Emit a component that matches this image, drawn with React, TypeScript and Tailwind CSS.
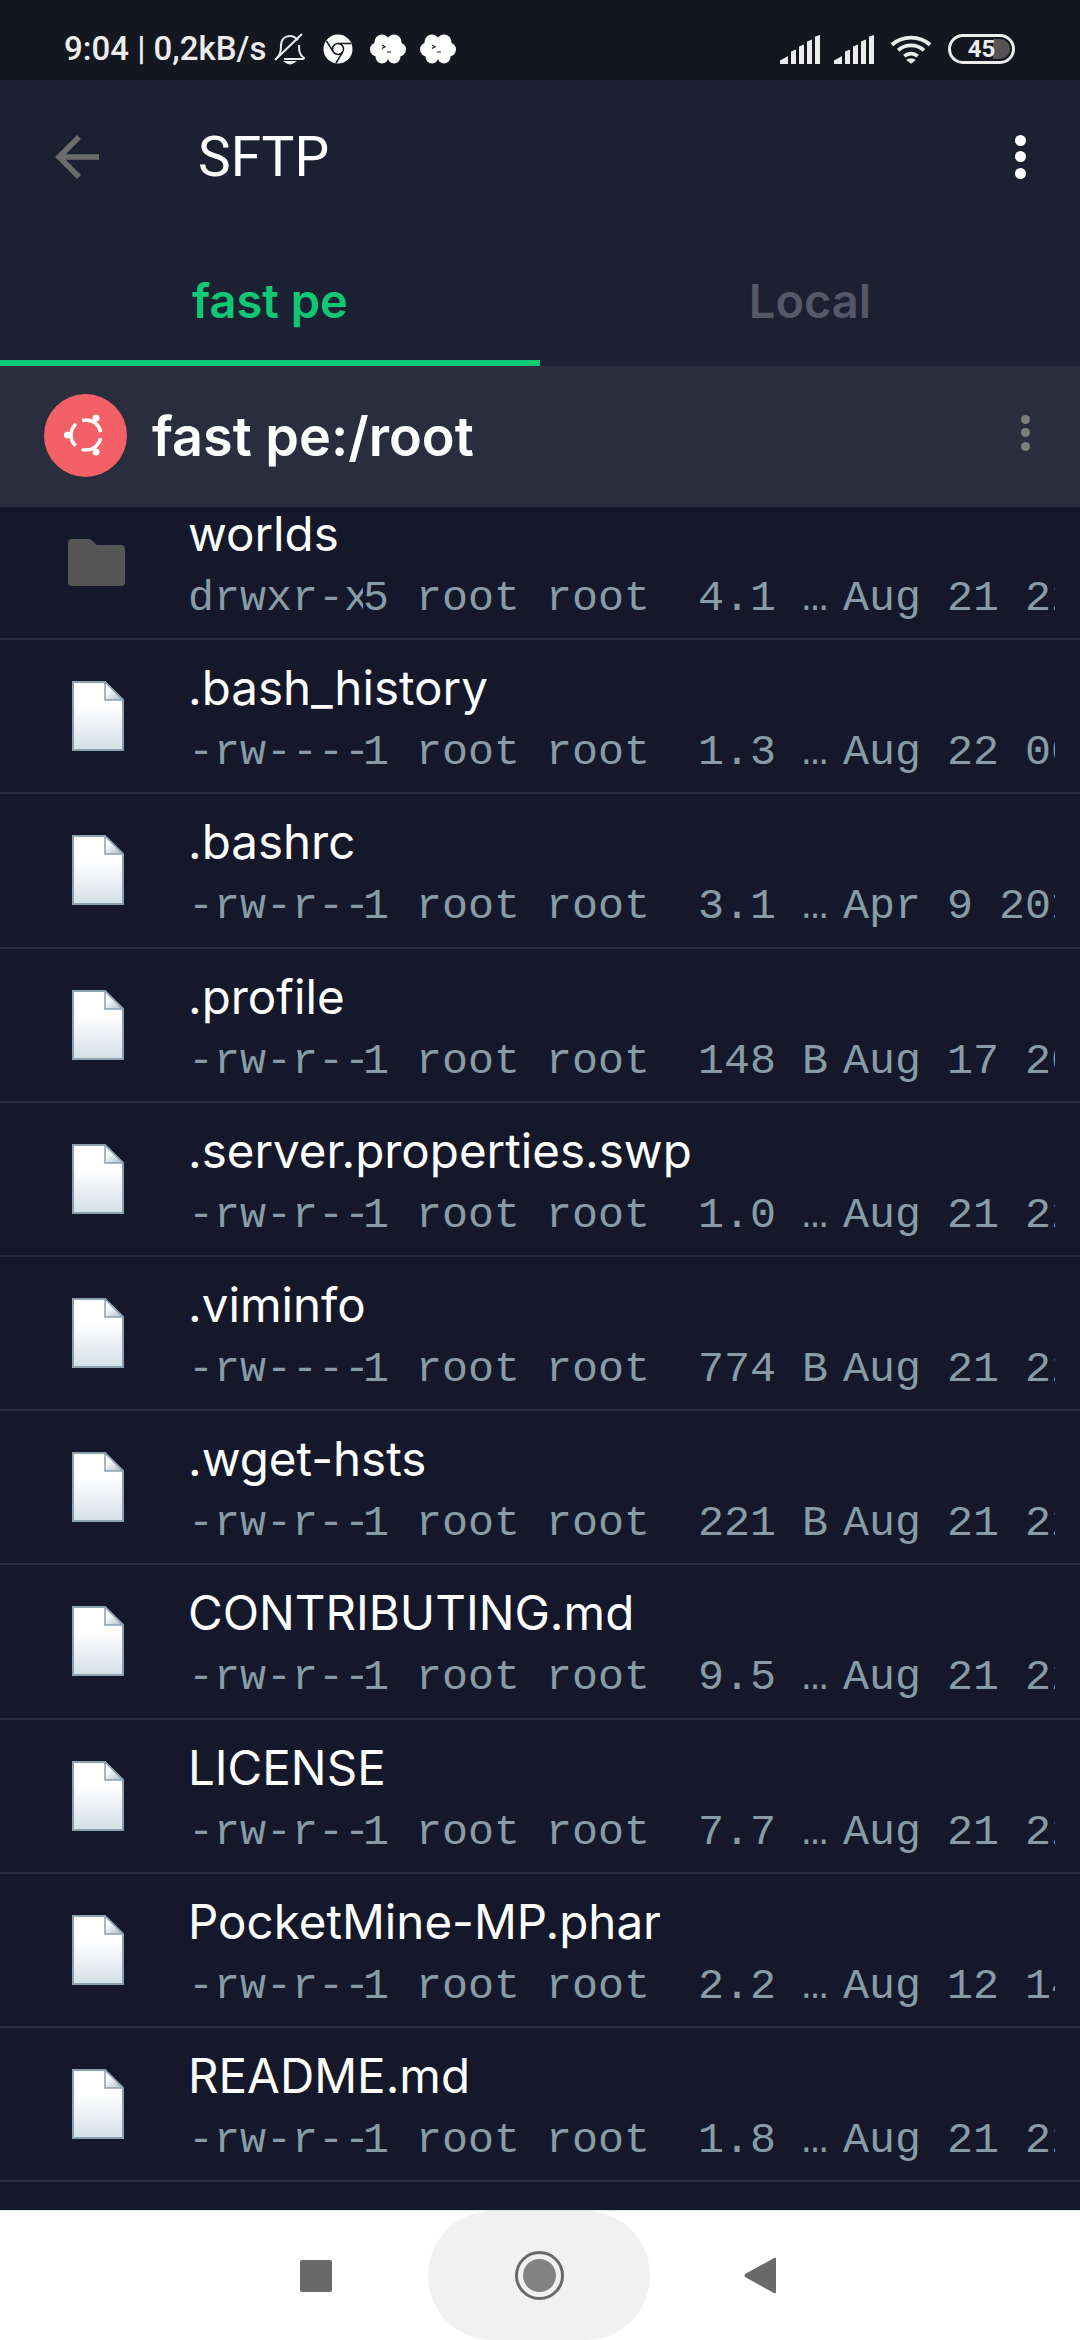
const mono = "font-['Liberation_Mono',monospace]"

const files = [
  { name: '.bash_history', perms: '-rw----', size: '1.3 KB', date: 'Aug 22 00:14' },
  { name: '.bashrc', perms: '-rw-r--', size: '3.1 KB', date: 'Apr 9 2018' },
  { name: '.profile', perms: '-rw-r--', size: '148 B', date: 'Aug 17 20:02' },
  { name: '.server.properties.swp', perms: '-rw-r--', size: '1.0 KB', date: 'Aug 21 22:31' },
  { name: '.viminfo', perms: '-rw----', size: '774 B', date: 'Aug 21 22:40' },
  { name: '.wget-hsts', perms: '-rw-r--', size: '221 B', date: 'Aug 21 22:12' },
  { name: 'CONTRIBUTING.md', perms: '-rw-r--', size: '9.5 KB', date: 'Aug 21 22:12' },
  { name: 'LICENSE', perms: '-rw-r--', size: '7.7 KB', date: 'Aug 21 22:12' },
  { name: 'PocketMine-MP.phar', perms: '-rw-r--', size: '2.2 MB', date: 'Aug 12 14:50' },
  { name: 'README.md', perms: '-rw-r--', size: '1.8 KB', date: 'Aug 21 22:12' },
]

function FileIcon() {
  return (
    <svg width="52" height="70" viewBox="0 0 52 70" className="shrink-0">
      <defs>
        <linearGradient id="page" x1="0" y1="0" x2="0" y2="1">
          <stop offset="0.35" stopColor="#ffffff" />
          <stop offset="1" stopColor="#d5e0e8" />
        </linearGradient>
        <linearGradient id="fold" x1="0" y1="0" x2="1" y2="1">
          <stop offset="0.3" stopColor="#ffffff" />
          <stop offset="1" stopColor="#a9b6c0" />
        </linearGradient>
      </defs>
      <path d="M1 1H33L51 19V69H1Z" fill="url(#page)" stroke="#8ba0b0" strokeWidth="2" />
      <path d="M33 1L51 19H33Z" fill="url(#fold)" stroke="#8ba0b0" strokeWidth="1.5" />
    </svg>
  )
}

function FolderIcon() {
  return (
    <svg width="57" height="47" viewBox="0 0 57 47" className="shrink-0">
      <path d="M4 0H22L29 6H53Q57 6 57 10V43Q57 47 53 47H4Q0 47 0 43V4Q0 0 4 0Z" fill="#555555" />
    </svg>
  )
}

function UbuntuLogo() {
  return (
    <div className="w-[83px] h-[83px] mb-[3px] rounded-full bg-[#f46067] flex items-center justify-center shrink-0">
      <svg width="44" height="44" viewBox="0 0 44 44" fill="none">
        <circle cx="22" cy="22" r="15" stroke="#fff" strokeWidth="3.500" strokeDasharray="24.400 7" strokeDashoffset="-3.500" />
        <circle cx="3.500" cy="22" r="3.500" fill="#fff" />
        <circle cx="32" cy="5" r="3.500" fill="#fff" />
        <circle cx="32" cy="39" r="3.500" fill="#fff" />
      </svg>
    </div>
  )
}

function Cloud() {
  return (
    <svg width="36" height="30" viewBox="0 0 36 30">
      <g fill="#fff">
        <circle cx="12" cy="8" r="7.500" />
        <circle cx="24" cy="8" r="7.500" />
        <circle cx="7" cy="15.500" r="7" />
        <circle cx="29" cy="15.500" r="7" />
        <circle cx="12" cy="23" r="6.500" />
        <circle cx="24" cy="23" r="6.500" />
        <circle cx="18" cy="15" r="10" />
      </g>
      <path d="M12 11L15 12.800L12 14.500M17 18H21" stroke="#14171f" strokeWidth="1.200" fill="none" />
    </svg>
  )
}

function Signal() {
  return (
    <svg width="40" height="29" viewBox="0 0 40 29" fill="#ececec">
      <path d="M0 29V25.500L8 21V29Z" />
      <path d="M11 29V16.500L16 14.500V29Z" />
      <path d="M19 29V11.500L24 9.500V29Z" />
      <path d="M27 29V6.500L32 4.500V29Z" />
      <path d="M35 29V1.500L40 0V29Z" />
    </svg>
  )
}

function StatusBar() {
  return (
    <div className="h-[80px] bg-[#14171f] flex items-center justify-between pl-[64px] pr-[65px] pt-[18px] font-['Roboto',sans-serif] text-[#ececec]">
      <div className="flex items-center">
        <span className="text-[33px] font-medium whitespace-nowrap">9:04 | 0,2kB/s</span>
        <svg width="32" height="32" viewBox="0 0 32 32" fill="none" stroke="#ececec" strokeWidth="2" className="ml-[8px]">
          <path d="M3 25C7 21 7 17 7 13C7 6 11 3 16 3C20 3 22 5 24 7M25 12C25 18 25 21 30 25C30 26 29 26 27 26H10" />
          <path d="M1 27L28 1" />
          <path d="M12 29Q16 32 20 29Z" fill="#ececec" />
        </svg>
        <svg width="30" height="30" viewBox="0 0 30 30" className="ml-[17px]">
          <circle cx="15" cy="15" r="14.500" fill="#fff" />
          <circle cx="15" cy="15" r="5.500" fill="none" stroke="#14171f" strokeWidth="1.500" />
          <path d="M15 9.500H28M10.200 17.800L3.500 7M19.800 17.800L13 29" stroke="#14171f" strokeWidth="1.500" />
        </svg>
        <div className="ml-[17px]"><Cloud /></div>
        <div className="ml-[14px]"><Cloud /></div>
      </div>
      <div className="flex items-center">
        <Signal />
        <div className="ml-[14px]"><Signal /></div>
        <svg width="42" height="29" viewBox="0 0 44 30" fill="none" stroke="#ececec" strokeWidth="4" className="ml-[16px]">
          <path d="M2 10C13 0 31 0 42 10M8.500 16C16 9 28 9 35.500 16M15 22C19 18.500 25 18.500 29 22" />
          <path d="M22 30L17 26C20 24 24 24 27 26Z" fill="#ececec" stroke="none" />
        </svg>
        <div className="relative ml-[16px] w-[67px] h-[30px] rounded-full border-[3px] border-[#ececec] flex items-center justify-center overflow-hidden">
          <div className="absolute right-[2px] top-[2px] bottom-[2px] w-[17px] rounded-r-full bg-[#555555]" />
          <span className="relative text-[24px] font-bold leading-none text-[#ececec]">45</span>
        </div>
      </div>
    </div>
  )
}

function AppBar() {
  return (
    <div className="h-[153px] bg-[#1c2033] flex items-center pl-[55px] pr-[54px]">
      <svg width="44" height="44" viewBox="0 0 44 44" fill="none" stroke="#6c6c6c" strokeWidth="5.500">
        <path d="M44 22H6M24 2L4 22L24 42" />
      </svg>
      <span className="ml-[99px] pt-[2px] text-white text-[55px] font-['Roboto',sans-serif]">SFTP</span>
      <div className="ml-auto flex flex-col gap-[5.500px]">
        <div className="w-[11px] h-[11px] rounded-full bg-white" />
        <div className="w-[11px] h-[11px] rounded-full bg-white" />
        <div className="w-[11px] h-[11px] rounded-full bg-white" />
      </div>
    </div>
  )
}

function Tabs() {
  return (
    <div className="h-[133px] bg-[#1c2033] flex font-['Inter',sans-serif] font-semibold text-[47px]">
      <div className="w-1/2 flex items-center justify-center border-b-[6px] border-[#10c773] text-[#10c773] pt-[9px]">fast pe</div>
      <div className="w-1/2 flex items-center justify-center border-b-[6px] border-transparent text-[#555868] pt-[9px]">Local</div>
    </div>
  )
}

function PathBar() {
  return (
    <div className="h-[141px] bg-[#2a2d3e] flex items-center pl-[44px] pr-[50px]">
      <UbuntuLogo />
      <span className="ml-[25px] text-white text-[54px] font-semibold font-['Inter',sans-serif]">fast pe:/root</span>
      <div className="ml-auto mb-[8px] flex flex-col gap-[4.500px]">
        <div className="w-[9px] h-[9px] rounded-full bg-[#7d7d7d]" />
        <div className="w-[9px] h-[9px] rounded-full bg-[#7d7d7d]" />
        <div className="w-[9px] h-[9px] rounded-full bg-[#7d7d7d]" />
      </div>
    </div>
  )
}

function Row({ name, perms, size, date, links = '1', folder }: { name: string; perms: string; size: string; date: string; links?: string; folder?: boolean }) {
  return (
    <div className="h-[154.200px] shrink-0 border-b-[2px] border-[#2a2d3e] flex items-center pr-[25px]">
      <div className={`w-[188px] shrink-0 flex ${folder ? 'pl-[68px]' : 'pl-[72px]'}`}>{folder ? <FolderIcon /> : <FileIcon />}</div>
      <div className="min-w-0 flex-1 pt-[9px]">
        <div className="text-white text-[47.500px] leading-[56px] font-['Inter',sans-serif] whitespace-nowrap">{name}</div>
        <div className={`flex text-[43.330px] leading-[56px] text-[#8a9ba8] mt-[9px] whitespace-nowrap ${mono}`}>
          <span className="shrink-0 w-[175px] overflow-hidden">{perms}</span>
          <span className="shrink-0 w-[53px]">{links}</span>
          <span className="shrink-0 w-[130px]">root</span>
          <span className="shrink-0 w-[152px]">root</span>
          <span className="shrink-0 w-[131px] truncate">{size}</span>
          <span className="ml-[14px] flex-1 min-w-0 overflow-hidden">{date}</span>
        </div>
      </div>
    </div>
  )
}

function NavBar() {
  return (
    <div className="h-[130px] bg-white border-t border-[#e4e4ec] flex items-center pl-[300px] shrink-0">
      <div className="w-[32px] h-[32px] rounded-[2px] bg-[#6a6a6a]" />
      <div className="ml-[96px] mr-[94px] w-[222px] h-[129px] rounded-[64px] bg-[#f1f1f1] flex items-center justify-center">
        <div className="w-[49px] h-[49px] rounded-full border-[3px] border-[#6a6a6a] flex items-center justify-center">
          <div className="w-[33px] h-[33px] rounded-full bg-[#828282]" />
        </div>
      </div>
      <svg width="32" height="37" viewBox="0 0 32 37">
        <path d="M31 0.500Q32 0.500 32 2V35Q32 37 30 36L1 20Q0 18.500 1 17Z" fill="#6a6a6a" />
      </svg>
    </div>
  )
}

export default function App() {
  return (
    <div className="w-[1080px] h-[2340px] flex flex-col overflow-hidden bg-[#14182a]">
      <StatusBar />
      <AppBar />
      <Tabs />
      <PathBar />
      <div className="flex-1 min-h-0 overflow-hidden bg-[#14182a]">
        <div className="-mt-[21px]">
          <Row folder name="worlds" perms="drwxr-x" links="5" size="4.1 KB" date="Aug 21 22:30" />
          {files.map((f) => (
            <Row key={f.name} {...f} />
          ))}
          <Row name="plugin_data" perms="drwxr-x" links="3" size="4.1 KB" date="Aug 21 22:12" />
        </div>
      </div>
      <NavBar />
    </div>
  )
}
